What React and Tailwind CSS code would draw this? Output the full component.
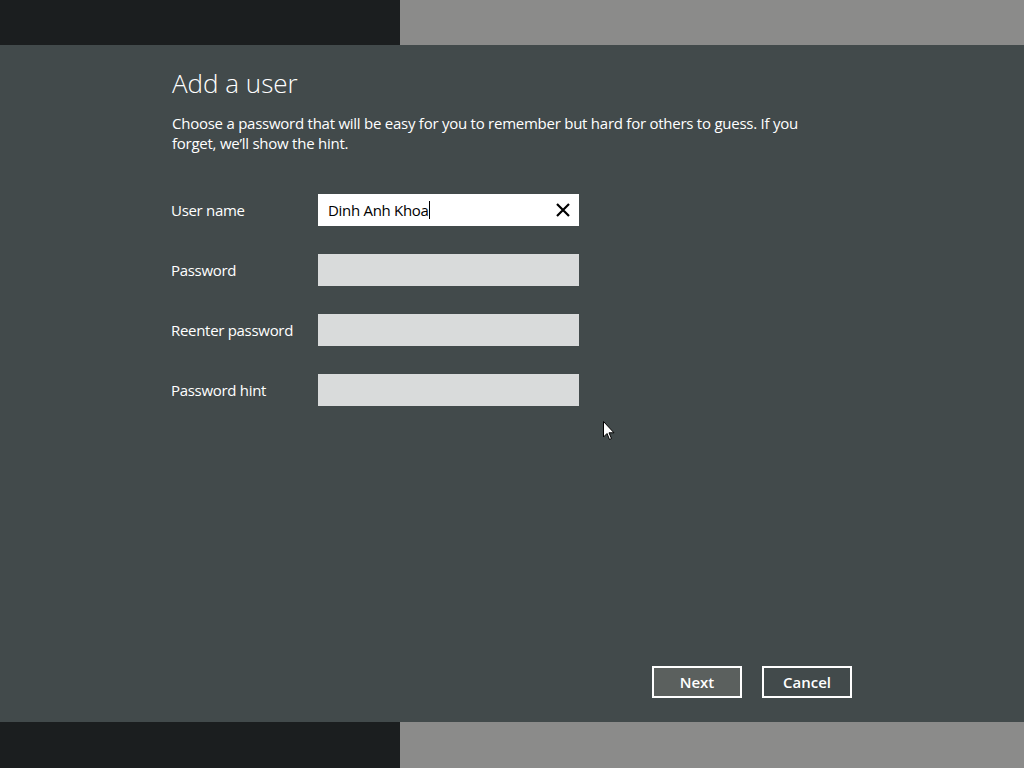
import React from 'react';

const font = { fontFamily: '"Open Sans", "Noto Sans", "Liberation Sans", sans-serif' };

function Field({ label, value, active }) {
    return (
        <div className="flex items-center h-8">
            <div className="w-[147px] text-[15px] tracking-[-0.3px] text-white">{label}</div>
            {active ? (
                <div className="w-[261px] h-8 bg-white flex items-center pl-[10px] pr-[8px]">
                    <span className="text-[15px] tracking-[-0.3px] text-black">{value}</span>
                    <span className="w-px h-[18px] bg-black" />
                    <svg className="ml-auto" width="16" height="16" viewBox="0 0 16 16">
                        <path d="M2 2 L14 14 M14 2 L2 14" stroke="#000" strokeWidth="2.2" />
                    </svg>
                </div>
            ) : (
                <div className="w-[261px] h-8 bg-[#d9dbdb]" />
            )}
        </div>
    );
}

export default function App() {
    return (
        <div className="w-[1024px] h-[768px] flex flex-col bg-[#424a4b] relative overflow-hidden" style={font}>
            <div className="h-[45px] flex shrink-0">
                <div className="w-[400px] bg-[#1b1e1f]" />
                <div className="flex-1 bg-[#8b8b8a]" />
            </div>

            <div className="flex-1 flex flex-col pl-[172px] pt-[21px]">
                <h1 className="text-[26px] font-light text-white leading-[34px]">Add a user</h1>
                <p className="mt-[13px] w-[630px] text-[15px] tracking-[-0.25px] leading-[20px] text-white">
                    Choose a password that will be easy for you to remember but hard for others to guess. If you forget, we’ll show the hint.
                </p>

                <div className="mt-[41px] flex flex-col gap-7 -ml-px">
                    <Field label="User name" value="Dinh Anh Khoa" active />
                    <Field label="Password" />
                    <Field label="Reenter password" />
                    <Field label="Password hint" />
                </div>

                <div className="mt-auto mb-6 flex gap-[20px] pl-[480px]">
                    <button className="w-[90px] h-8 border-2 border-white bg-[#5b605e] text-white text-[15px] font-semibold">Next</button>
                    <button className="w-[90px] h-8 border-2 border-white text-white text-[15px] font-semibold">Cancel</button>
                </div>
            </div>

            <div className="h-[46px] flex shrink-0">
                <div className="w-[400px] bg-[#1b1e1f]" />
                <div className="flex-1 bg-[#8b8b8a]" />
            </div>

            {/* mouse pointer */}
            <svg className="absolute left-[603px] top-[421px]" width="12" height="20" viewBox="0 0 12 20">
                <path d="M0.5 0.5 L0.5 16 L4 12.5 L6.5 18.5 L8.5 17.5 L6 11.8 L11 11.8 Z" fill="#fff" stroke="#000" strokeWidth="1" />
            </svg>
        </div>
    );
}
